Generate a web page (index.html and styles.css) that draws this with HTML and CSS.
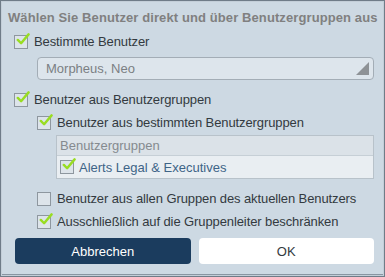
FILE: index.html
```html
<!DOCTYPE html>
<html lang="de">

<head>
    <meta charset="UTF-8">
    <title>Benutzer auswählen</title>
    <link rel="stylesheet" href="styles.css">
</head>

<body>
    <div class="dialog">
        <div class="title">Wählen Sie Benutzer direkt und über Benutzergruppen aus</div>

        <label class="option">
            <span class="box checked"><svg viewBox="0 0 16 16"><path d="M3 8.5 L6.5 12 L14.5 2.5"></path></svg></span>
            <span>Bestimmte Benutzer</span>
        </label>
        <div class="select indent">
            <span>Morpheus, Neo</span>
            <svg class="arrow" viewBox="0 0 14 14"><polygon points="14 0 14 14 0 14"></polygon></svg>
        </div>

        <label class="option">
            <span class="box checked"><svg viewBox="0 0 16 16"><path d="M3 8.5 L6.5 12 L14.5 2.5"></path></svg></span>
            <span>Benutzer aus Benutzergruppen</span>
        </label>
        <div class="indent">
            <label class="option">
                <span class="box checked"><svg viewBox="0 0 16 16"><path d="M3 8.5 L6.5 12 L14.5 2.5"></path></svg></span>
                <span>Benutzer aus bestimmten Benutzergruppen</span>
            </label>
            <div class="groups">
                <div class="groups-head">Benutzergruppen</div>
                <label class="groups-row">
                    <span class="box checked"><svg viewBox="0 0 16 16"><path d="M3 8.5 L6.5 12 L14.5 2.5"></path></svg></span>
                    <span>Alerts Legal &amp; Executives</span>
                </label>
            </div>
            <label class="option">
                <span class="box"></span>
                <span>Benutzer aus allen Gruppen des aktuellen Benutzers</span>
            </label>
            <label class="option">
                <span class="box checked"><svg viewBox="0 0 16 16"><path d="M3 8.5 L6.5 12 L14.5 2.5"></path></svg></span>
                <span>Ausschließlich auf die Gruppenleiter beschränken</span>
            </label>
        </div>

        <div class="buttons">
            <button class="btn cancel">Abbrechen</button>
            <button class="btn ok">OK</button>
        </div>
    </div>
</body>

</html>
```

FILE: styles.css
```css
html,
body {
    margin: 0;
    padding: 0;
    background: #ffffff;
    font-family: "Liberation Sans", Arial, sans-serif;
}

.dialog {
    width: 385px;
    height: 277px;
    box-sizing: border-box;
    border: 1px solid #6f7c88;
    box-shadow: inset 0 0 0 1px #c3ced8, inset 0 -2px 0 0 #8995a1;
    background: #cdd9e3;
    padding: 9px 10px 0 13px;
    color: #333a40;
    font-size: 13px;
}

.title {
    font-weight: bold;
    color: #808080;
    font-size: 13px;
    letter-spacing: 0.1px;
    margin-left: -6px;
    margin-bottom: 9px;
    white-space: nowrap;
}

.option {
    display: flex;
    align-items: center;
    gap: 6px;
    height: 15px;
    margin-bottom: 8px;
    letter-spacing: -0.1px;
}

.box {
    position: relative;
    width: 12px;
    height: 12px;
    flex: none;
    border: 1px solid #8e979f;
    background: #dde4ea;
}

.box svg {
    position: absolute;
    left: 0;
    top: -4px;
    width: 15px;
    height: 15px;
    fill: none;
    stroke: #99dd22;
    stroke-width: 2.6;
    stroke-linecap: round;
    stroke-linejoin: round;
}

.indent {
    margin-left: 23px;
}

.select {
    display: flex;
    align-items: center;
    justify-content: space-between;
    height: 23px;
    box-sizing: border-box;
    border: 1px solid #a3adb6;
    border-radius: 4px;
    background: #dde5ec;
    padding: 0 4px 0 8px;
    margin-top: 1px;
    margin-bottom: 12px;
    color: #7b7f83;
}

.arrow {
    width: 13px;
    height: 13px;
    fill: #8e9296;
}

.groups {
    margin-left: 19px;
    margin-top: -3px;
    margin-bottom: 12px;
    border: 1px solid #b8c2ca;
}

.groups-head {
    height: 19px;
    line-height: 19px;
    padding-left: 3px;
    background: #dbe2e8;
    color: #858a8f;
    border-bottom: 1px solid #c6cfd6;
}

.groups-row {
    display: flex;
    align-items: center;
    gap: 5px;
    height: 22px;
    padding-left: 3px;
    background: #e9eef2;
    color: #3e6487;
}

.buttons {
    display: flex;
    gap: 8px;
    margin-top: 9px;
    margin-left: 1px;
}

.btn {
    flex: 1;
    height: 26px;
    border: none;
    border-radius: 4px;
    font-family: "Liberation Sans", Arial, sans-serif;
    font-size: 13px;
}

.cancel {
    background: #1b3c5e;
    color: #ffffff;
}

.ok {
    background: #ffffff;
    color: #333a40;
}
```
